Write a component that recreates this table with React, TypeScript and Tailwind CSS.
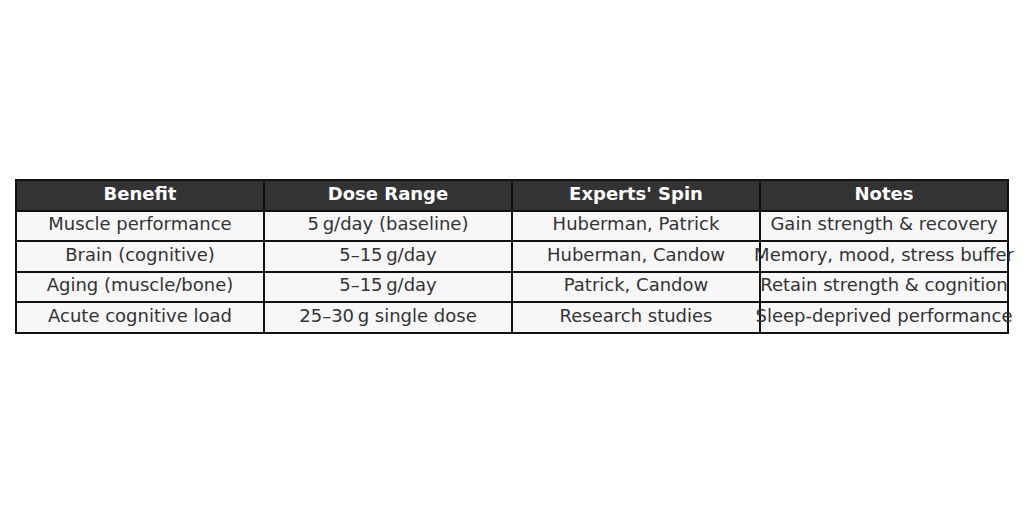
const headers = ["Benefit", "Dose Range", "Experts' Spin", "Notes"];

const rows = [
  ["Muscle performance", "5\u2009g/day (baseline)", "Huberman, Patrick", "Gain strength & recovery"],
  ["Brain (cognitive)", "5\u201315\u2009g/day", "Huberman, Candow", "Memory, mood, stress buffer"],
  ["Aging (muscle/bone)", "5\u201315\u2009g/day", "Patrick, Candow", "Retain strength & cognition"],
  ["Acute cognitive load", "25\u201330\u2009g single dose", "Research studies", "Sleep-deprived performance"],
];

export default function App() {
  return (
    <div
      className="flex h-[512px] w-[1024px] items-center justify-center bg-white"
      style={{ fontFamily: '"DejaVu Sans", "Liberation Sans", sans-serif' }}
    >
      <table className="w-[992px] table-fixed border-collapse text-[18px] leading-[22px]">
        <thead>
          <tr className="h-[31px]">
            {headers.map((h) => (
              <th key={h} className="w-[248px] border-2 border-[#111] bg-[#333333] p-0 pb-[3px] font-bold text-white">
                <div className="flex justify-center whitespace-nowrap">{h}</div>
              </th>
            ))}
          </tr>
        </thead>
        <tbody>
          {rows.map((row, i) => (
            <tr key={i} className="h-[30.5px]">
              {row.map((cell, j) => (
                <td key={j} className="border-2 border-[#111] bg-[#f7f7f7] p-0 pb-[3px] text-[#333333]">
                  <div className="flex justify-center whitespace-nowrap">{cell}</div>
                </td>
              ))}
            </tr>
          ))}
        </tbody>
      </table>
    </div>
  );
}
